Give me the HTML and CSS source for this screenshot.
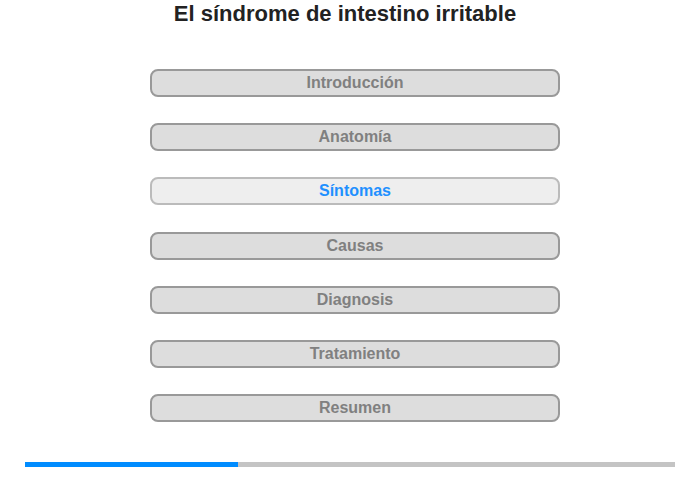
FILE: index.html
```html
<!DOCTYPE html>
<html lang="es">
<head>
  <meta charset="UTF-8" />
  <meta name="viewport" content="width=device-width, initial-scale=1.0"/>
  <title>El síndrome de intestino irritable</title>
  <link rel="stylesheet" href="styles.css">
</head>
<body>

  <h1 class="title">El síndrome de intestino irritable</h1>

  <nav class="menu">
    <button class="menu-btn">Introducción</button>
    <button class="menu-btn">Anatomía</button>
    <button class="menu-btn active">Síntomas</button>
    <button class="menu-btn">Causas</button>
    <button class="menu-btn">Diagnosis</button>
    <button class="menu-btn">Tratamiento</button>
    <button class="menu-btn">Resumen</button>
  </nav>

  <div class="progress">
    <div class="progress-fill" style="width: 32.8%;"></div>
  </div>

</body>
</html>
```

FILE: styles.css
```css
body {
  margin: 0;
  font-family: 'Liberation Sans', Arial, sans-serif;
  background: #fff;
  color: #222;
}

.title {
  margin: 0;
  padding: 1px 10px 0 0;
  font-size: 22px;
  line-height: 26px;
  font-weight: bold;
  text-align: center;
  color: #222;
}

.menu {
  display: flex;
  flex-direction: column;
  gap: 26.2px;
  width: 410px;
  margin: 42px auto 0 150px;
}

.menu-btn {
  box-sizing: border-box;
  height: 28px;
  padding: 0;
  background: #dddddd;
  border: 2px solid #999;
  border-radius: 8px;
  font-family: 'Liberation Sans', Arial, sans-serif;
  font-size: 16px;
  font-weight: bold;
  color: #808080;
  cursor: pointer;
}

.menu-btn.active {
  background: #eeeeee;
  border-color: #bbb;
  color: #1e90ff;
}

.progress {
  height: 5px;
  margin: 40px 25px 0;
  background: #c4c4c4;
}

.progress-fill {
  height: 100%;
  background: #008cff;
}
```
